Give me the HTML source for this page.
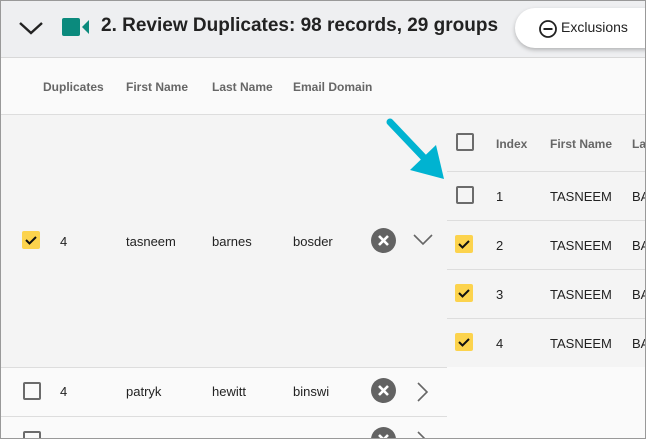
<!DOCTYPE html>
<html><head><style>
html,body{margin:0;padding:0;overflow:hidden;width:646px;height:439px}
body{font-family:"Liberation Sans",sans-serif;background:#fafafa}
#w{position:relative;width:646px;height:439px;overflow:hidden}
.a{position:absolute}
.hd{font-size:12px;font-weight:bold;color:#666}
.t{font-size:13px;color:#222}
.cb{position:absolute;width:14px;height:14px;border:2px solid #6b6b6b;border-radius:2px;box-sizing:content-box}
.ck{position:absolute;width:18px;height:18px;background:#fcd34d;border-radius:2px}
.x{position:absolute;width:25px;height:25px;border-radius:50%;background:#636363}
.line{position:absolute;height:1px;background:#ddd}
</style></head><body><div id="w">
<div class="a" style="left:0;top:0;width:646px;height:57px;background:#eeeff1;border-bottom:1px solid #d8d8d8"></div>
<svg class="a" style="left:18px;top:20px" width="26" height="16"><path d="M2 3 L13 13 L24 3" fill="none" stroke="#222" stroke-width="2.4"/></svg>
<svg class="a" style="left:62px;top:17px" width="28" height="21"><rect x="0" y="1" width="18" height="18" rx="2" fill="#0b8a7d"/><path d="M20 10 L27 3 L27 17 Z" fill="#0b8a7d"/></svg>
<div class="a" style="left:101px;top:15px;font-size:19px;font-weight:bold;color:#222">2. Review Duplicates: 98 records, 29 groups</div>
<div class="a" style="left:515px;top:8px;width:150px;height:40px;background:#fff;border-radius:20px;box-shadow:0 2px 4px rgba(0,0,0,.25)"></div>
<svg class="a" style="left:538px;top:19px" width="20" height="20"><circle cx="10" cy="10" r="8" fill="none" stroke="#222" stroke-width="1.8"/><path d="M5.5 10h9" stroke="#222" stroke-width="2"/></svg>
<div class="a" style="left:561px;top:19px;font-size:14px;color:#222">Exclusions</div>
<div class="a" style="left:0;top:58px;width:646px;height:56px;background:#fafafa"></div>
<div class="a hd" style="left:43px;top:80px">Duplicates</div>
<div class="a hd" style="left:126px;top:80px">First Name</div>
<div class="a hd" style="left:212px;top:80px">Last Name</div>
<div class="a hd" style="left:293px;top:80px">Email Domain</div>
<div class="line" style="left:0;top:114px;width:646px"></div>
<div class="a" style="left:0;top:115px;width:646px;height:252px;background:#f4f4f4"></div>
<div class="ck" style="left:22px;top:231px"></div>
<svg class="a" style="left:22px;top:231px" width="18" height="18"><path d="M4 9l3.5 3.5L14 6" fill="none" stroke="#111" stroke-width="2"/></svg>
<div class="a t" style="left:60px;top:234px">4</div>
<div class="a t" style="left:126px;top:234px">tasneem</div>
<div class="a t" style="left:212px;top:234px">barnes</div>
<div class="a t" style="left:293px;top:234px">bosder</div>
<div class="x" style="left:371px;top:228px"></div>
<svg class="a" style="left:371px;top:228px" width="25" height="25"><path d="M8 8l9 9M17 8l-9 9" stroke="#fff" stroke-width="2.6"/></svg>
<svg class="a" style="left:413px;top:234px" width="20" height="12"><path d="M1 1l9 9 9-9" fill="none" stroke="#666" stroke-width="1.6"/></svg>
<div class="line" style="left:447px;top:171px;width:199px"></div>
<div class="line" style="left:447px;top:220px;width:199px"></div>
<div class="line" style="left:447px;top:269px;width:199px"></div>
<div class="line" style="left:447px;top:318px;width:199px"></div>
<div class="cb" style="left:456px;top:133px"></div>
<div class="a hd" style="left:496px;top:137px">Index</div>
<div class="a hd" style="left:550px;top:137px">First Name</div>
<div class="a hd" style="left:632px;top:137px">La</div>
<div class="cb" style="left:456px;top:186px"></div>
<div class="a t" style="left:496px;top:189px">1</div><div class="a t" style="left:550px;top:189px">TASNEEM</div><div class="a t" style="left:632px;top:189px">BA</div>
<div class="ck" style="left:455px;top:235px"></div><svg class="a" style="left:455px;top:235px" width="18" height="18"><path d="M4 9l3.5 3.5L14 6" fill="none" stroke="#111" stroke-width="2"/></svg>
<div class="a t" style="left:496px;top:238px">2</div><div class="a t" style="left:550px;top:238px">TASNEEM</div><div class="a t" style="left:632px;top:238px">BA</div>
<div class="ck" style="left:455px;top:284px"></div><svg class="a" style="left:455px;top:284px" width="18" height="18"><path d="M4 9l3.5 3.5L14 6" fill="none" stroke="#111" stroke-width="2"/></svg>
<div class="a t" style="left:496px;top:287px">3</div><div class="a t" style="left:550px;top:287px">TASNEEM</div><div class="a t" style="left:632px;top:287px">BA</div>
<div class="ck" style="left:455px;top:333px"></div><svg class="a" style="left:455px;top:333px" width="18" height="18"><path d="M4 9l3.5 3.5L14 6" fill="none" stroke="#111" stroke-width="2"/></svg>
<div class="a t" style="left:496px;top:336px">4</div><div class="a t" style="left:550px;top:336px">TASNEEM</div><div class="a t" style="left:632px;top:336px">BA</div>
<div class="a" style="left:447px;top:367px;width:199px;height:72px;background:#fafafa"></div>
<svg class="a" style="left:380px;top:112px" width="70" height="75"><path d="M10 10 L48 50" stroke="#00b3d1" stroke-width="7" stroke-linecap="round"/><path d="M30 58 L64 67 L56 33 Z" fill="#00b3d1"/></svg>
<div class="line" style="left:0;top:367px;width:447px"></div>
<div class="cb" style="left:23px;top:382px"></div>
<div class="a t" style="left:60px;top:384px">4</div>
<div class="a t" style="left:126px;top:384px">patryk</div>
<div class="a t" style="left:212px;top:384px">hewitt</div>
<div class="a t" style="left:293px;top:384px">binswi</div>
<div class="x" style="left:371px;top:378px"></div>
<svg class="a" style="left:371px;top:378px" width="25" height="25"><path d="M8 8l9 9M17 8l-9 9" stroke="#fff" stroke-width="2.6"/></svg>
<svg class="a" style="left:417px;top:382px" width="12" height="20"><path d="M1 1l9 9-9 9" fill="none" stroke="#666" stroke-width="1.6"/></svg>
<div class="line" style="left:0;top:416px;width:447px"></div>
<div class="cb" style="left:23px;top:431px"></div>
<div class="x" style="left:371px;top:427px"></div>
<svg class="a" style="left:371px;top:427px" width="25" height="25"><path d="M8 8l9 9M17 8l-9 9" stroke="#fff" stroke-width="2.6"/></svg>
<svg class="a" style="left:417px;top:431px" width="12" height="20"><path d="M1 1l9 9-9 9" fill="none" stroke="#666" stroke-width="1.6"/></svg>
<div class="a" style="left:0;top:0;width:644px;height:437px;border:1px solid #999"></div>
</div></body></html>
